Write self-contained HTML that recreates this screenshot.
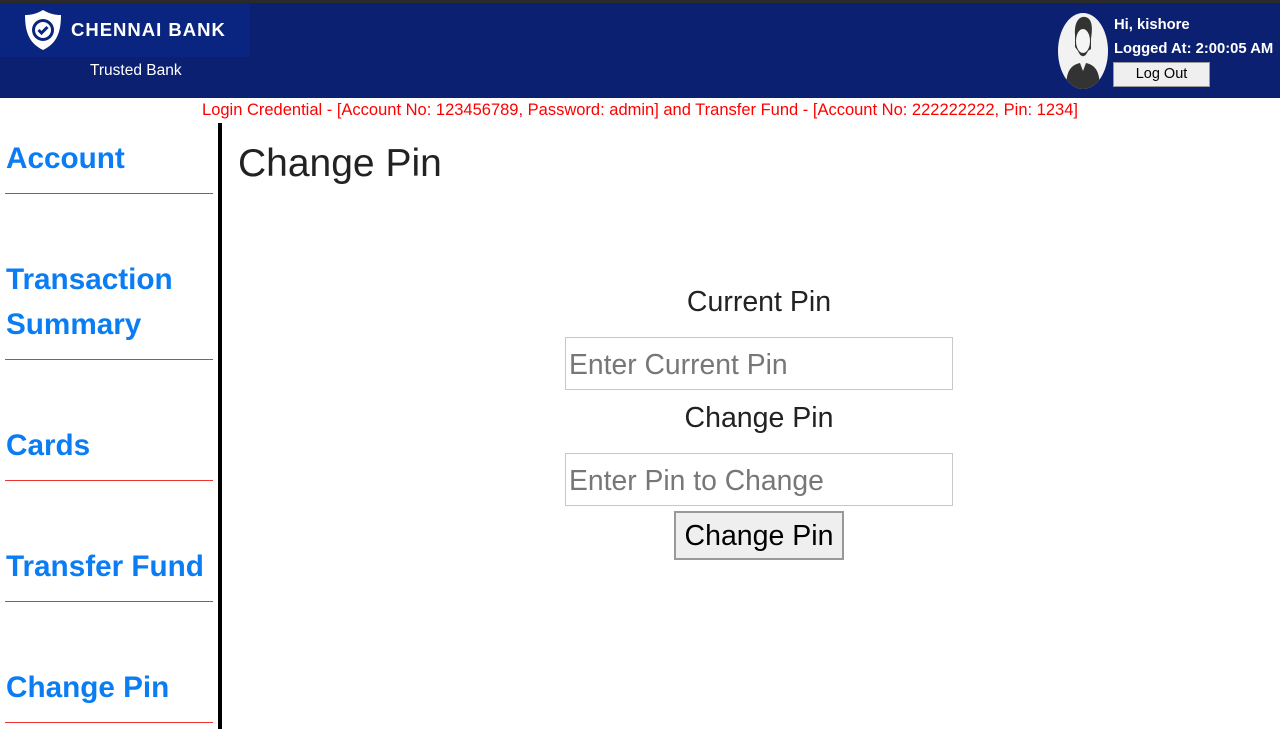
<!DOCTYPE html>
<html><head><style>
body{margin:0;width:1280px;height:729px;overflow:hidden;font-family:"Liberation Sans",Arial,sans-serif;background:#fff;position:relative}
.top{position:absolute;left:0;top:0;width:1280px;height:3px;background:#2a2a2a}
.hdr{position:absolute;left:0;top:3px;width:1280px;height:95px;background:#0c2071}
.logo{position:absolute;left:0;top:0;width:250px;height:54px;background:#0a2580}
.logo .t{position:absolute;left:71px;top:16px;color:#fff;font-weight:bold;font-size:18.5px;letter-spacing:1px}
.tb{position:absolute;left:90px;top:59px;color:#fff;font-size:15.5px}
.av{position:absolute;left:1058px;top:10px;width:50px;height:76px;border-radius:50%;background:#f2f2f2;overflow:hidden}
.u{position:absolute;left:1114px;color:#fff;font-size:14.8px;font-weight:bold}
.btn{position:absolute;left:1113px;top:59px;width:97px;height:25px;background:#efefef;border:1px solid #999;box-sizing:border-box;font-size:14.5px;text-align:center;line-height:23px;color:#000}
.note{position:absolute;top:101px;left:0;width:1280px;text-align:center;color:#f00;font-size:16.5px}
.side{position:absolute;left:218px;top:123px;width:4px;height:606px;background:#000}
.nav a{position:absolute;left:6px;color:#0a7cf4;font-weight:bold;font-size:29.7px;line-height:45px;text-decoration:none}
.nav i{position:absolute;left:5px;width:208px;height:1px;background:#e33}
h1{position:absolute;left:238px;top:142px;margin:0;font-weight:normal;font-size:39px;color:#222}
.lbl{position:absolute;left:565px;width:388px;text-align:center;font-size:28.5px;color:#222}
.inp{position:absolute;left:565px;width:388px;height:53px;border:1px solid #c8c8c8;box-sizing:border-box;font-size:28.3px;color:#777;padding-left:3px;line-height:53px}
.cb{position:absolute;left:674px;top:511px;width:170px;height:49px;background:#efefef;border:2px solid #999;box-sizing:border-box;font-size:28.5px;text-align:center;line-height:47px;color:#000}
</style></head><body>
<div class="top"></div>
<div class="hdr">
<div class="logo">
<svg style="position:absolute;left:24px;top:6px" width="38" height="42" viewBox="0 0 38 42"><path d="M19 1 C26 5 31 6 37 6 C37 26 31 35 19 41 C7 35 1 26 1 6 C7 6 12 5 19 1Z" fill="#fff"/><circle cx="19" cy="21" r="11" fill="#0a2580"/><circle cx="19" cy="21" r="8" fill="#fff"/><path d="M14.5 21 l3 3 l6 -6" stroke="#0a2580" stroke-width="3" fill="none"/></svg>
<div class="t">CHENNAI BANK</div></div>
<div class="tb">Trusted Bank</div>
<div class="av"><svg width="50" height="76" viewBox="0 0 50 76"><path d="M17 22 C16 8 22 3 27 4 C34 5 35 14 33 26 L33 36 L30 38 C27 45 23 45 20 38 L17 34Z" fill="#333"/><ellipse cx="25" cy="28" rx="7" ry="12" fill="#f5f5f5"/><path d="M8 76 C8 56 14 52 22 50 L25 58 L28 50 C36 52 42 56 42 76Z" fill="#333"/></svg></div>
<div class="u" style="top:14px">Hi, kishore</div>
<div class="u" style="top:38px">Logged At: 2:00:05 AM</div>
<div class="btn">Log Out</div>
</div>
<div class="note">Login Credential - [Account No: 123456789, Password: admin] and Transfer Fund - [Account No: 222222222, Pin: 1234]</div>
<div class="nav">
<a style="top:136px">Account</a><i style="top:193px"></i>
<a style="top:257px">Transaction<br>Summary</a><i style="top:359px"></i>
<a style="top:423px">Cards</a><i style="top:480px"></i>
<a style="top:544px">Transfer Fund</a><i style="top:601px"></i>
<a style="top:665px">Change Pin</a><i style="top:722px"></i>
</div>
<div class="side"></div>
<h1>Change Pin</h1>
<div class="lbl" style="top:286px">Current Pin</div>
<div class="inp" style="top:337px">Enter Current Pin</div>
<div class="lbl" style="top:402px">Change Pin</div>
<div class="inp" style="top:453px">Enter Pin to Change</div>
<div class="cb">Change Pin</div>
</body></html>
